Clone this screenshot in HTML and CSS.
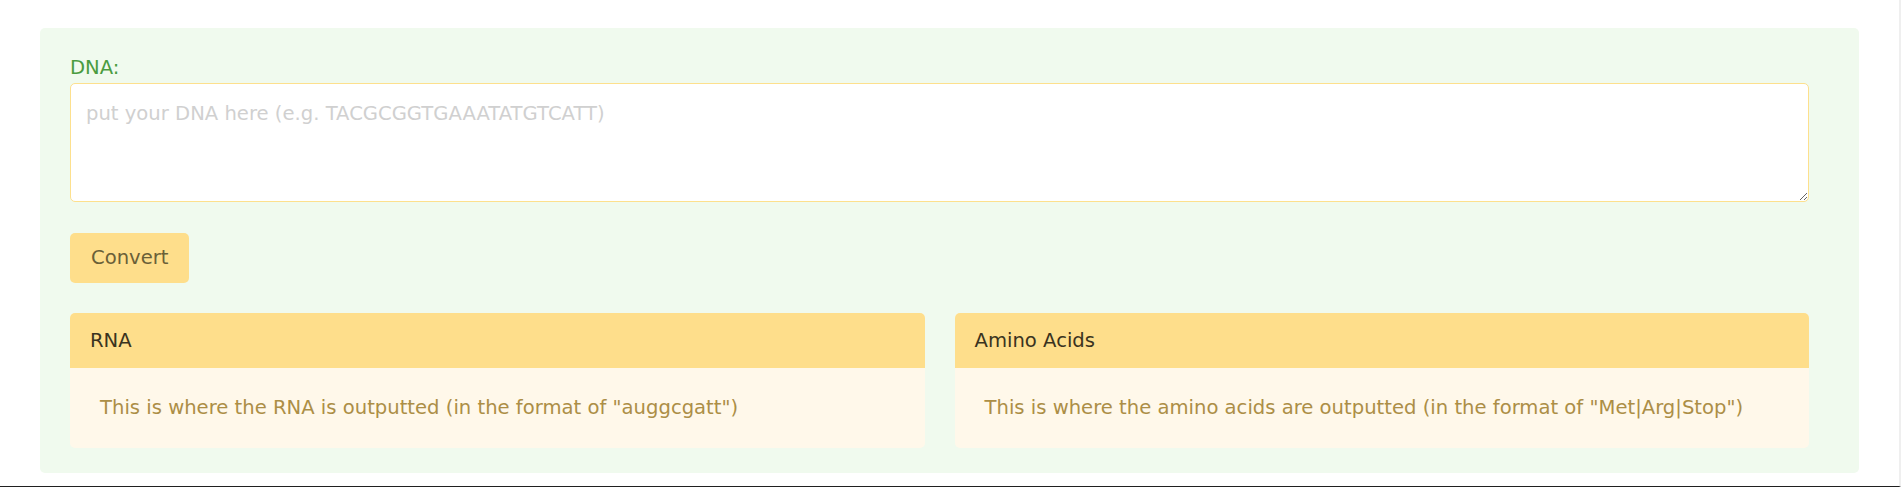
FILE: index.html
```html
<!DOCTYPE html>
<html lang="en">
<head>
<meta charset="utf-8">
<title>DNA Converter</title>
<link rel="stylesheet" href="styles.css">
</head>
<body>
<div class="page">
  <main class="panel">
    <label class="field-label" for="dna">DNA:</label>
    <textarea id="dna" class="dna-input" placeholder="put your DNA here (e.g. TACGCGGTGAAATATGTCATT)"></textarea>
    <button class="btn-convert" type="button">Convert</button>
    <div class="results">
      <section class="card">
        <div class="card-header">RNA</div>
        <div class="card-body">This is where the RNA is outputted (in the format of "auggcgatt")</div>
      </section>
      <section class="card">
        <div class="card-header">Amino Acids</div>
        <div class="card-body">This is where the amino acids are outputted (in the format of "Met|Arg|Stop")</div>
      </section>
    </div>
  </main>
</div>
</body>
</html>
```

FILE: styles.css
```css
* {
  box-sizing: border-box;
}

html, body {
  margin: 0;
  padding: 0;
  background: #ffffff;
}

body {
  font-family: "DejaVu Sans", "Liberation Sans", sans-serif;
  font-size: 19.6px;
  line-height: 30px;
}

.page {
  min-height: 100vh;
  padding: 28px 40px 0 40px;
  border-right: 2px solid #efefef;
  border-bottom: 1px solid #202020;
}

.panel {
  display: flex;
  flex-direction: column;
  align-items: flex-start;
  background: #f0faee;
  border-radius: 5px;
  padding: 25px 50px 25px 30px;
}

.field-label {
  display: block;
  color: #4a9c40;
  line-height: 30px;
}

.dna-input {
  display: block;
  width: 100%;
  height: 119px;
  margin: 0 0 31px 0;
  padding: 15px;
  border: 1px solid #fde08d;
  border-radius: 5px;
  background: #ffffff;
  font-family: inherit;
  font-size: 19.6px;
  line-height: 30px;
  color: #555;
  outline: none;
}

.dna-input::placeholder {
  color: #d0d0d0;
}

.btn-convert {
  display: block;
  padding: 10px 21px;
  border: 0;
  border-radius: 5px;
  background: #fede8b;
  color: #6a6038;
  font-family: inherit;
  font-size: 19.6px;
  line-height: 30px;
  margin: 0 0 30px 0;
}

.results {
  display: grid;
  grid-template-columns: 1fr 1fr;
  gap: 30px;
  width: 100%;
}

.card {
  border-radius: 5px;
  overflow: hidden;
  background: #fff8ea;
}

.card-header {
  background: #fede8b;
  color: #3a3320;
  padding: 15px 20px;
  line-height: 25px;
}

.card-body {
  padding: 25px 30px;
  color: #ac8e46;
  line-height: 30px;
}
```
